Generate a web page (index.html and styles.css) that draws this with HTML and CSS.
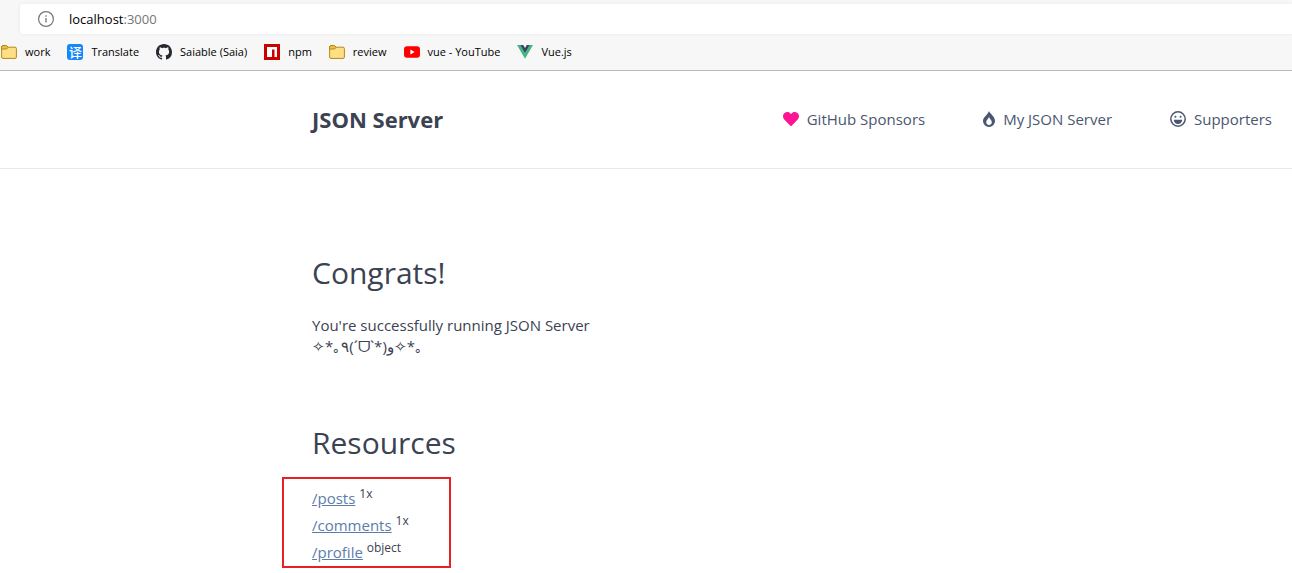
FILE: index.html
```html
<!DOCTYPE html>
<html lang="en">
<head>
<meta charset="utf-8">
<title>JSON Server</title>
<link rel="stylesheet" href="styles.css">
</head>
<body>
<div class="browser">
  <form class="address">
    <svg class="info" viewBox="0 0 16 16" aria-hidden="true"><circle cx="8" cy="8" r="7.4" fill="none" stroke="#767676" stroke-width="1.2"/><path d="M8 7v4.5M8 4.3v1.4" stroke="#767676" stroke-width="1.3"/></svg>
    <button type="button" class="url" aria-label="Edit address">localhost<span class="port">:3000</span></button>
  </form>
  <nav class="bookmarks" aria-label="Bookmarks">
    <a href="#"><svg viewBox="0 0 16 16"><path d="M.6 3.2Q.6 1.6 2 1.6H5.4L7.2 3.2H14Q15.4 3.2 15.4 4.6V13Q15.4 14.4 14 14.4H2Q.6 14.4.6 13Z" fill="#ffdf84" stroke="#b58a14"/><path d="M.6 3.2Q.6 1.6 2 1.6H5.4L7.2 3.2 5.6 5H.6Z" fill="#efc044" stroke="#b58a14"/></svg>work</a>
    <a href="#"><span class="translate">译</span>Translate</a>
    <a href="#"><svg viewBox="0 0 16 16"><path fill="#24292f" d="M8 0C3.58 0 0 3.58 0 8c0 3.54 2.29 6.53 5.47 7.59.4.07.55-.17.55-.38 0-.19-.01-.82-.01-1.49-2.01.37-2.53-.49-2.69-.94-.09-.23-.48-.94-.82-1.13-.28-.15-.68-.52-.01-.53.63-.01 1.08.58 1.23.82.72 1.21 1.87.87 2.33.66.07-.52.28-.87.51-1.07-1.78-.2-3.64-.89-3.64-3.95 0-.87.31-1.59.82-2.15-.08-.2-.36-1.02.08-2.12 0 0 .67-.21 2.2.82.64-.18 1.32-.27 2-.27s1.36.09 2 .27c1.53-1.04 2.2-.82 2.2-.82.44 1.1.16 1.92.08 2.12.51.56.82 1.27.82 2.15 0 3.07-1.87 3.75-3.65 3.95.29.25.54.73.54 1.48 0 1.07-.01 1.93-.01 2.2 0 .21.15.46.55.38A8.01 8.01 0 0 0 16 8c0-4.42-3.58-8-8-8z"/></svg>Saiable (Saia)</a>
    <a href="#"><svg viewBox="0 0 16 16"><path fill="#cb0000" d="M0 0H16V16H0Z"/><path fill="#fff" d="M3 3H13V13H10.5V5.5H8V13H3Z"/></svg>npm</a>
    <a href="#"><svg viewBox="0 0 16 16"><path d="M.6 3.2Q.6 1.6 2 1.6H5.4L7.2 3.2H14Q15.4 3.2 15.4 4.6V13Q15.4 14.4 14 14.4H2Q.6 14.4.6 13Z" fill="#ffdf84" stroke="#b58a14"/><path d="M.6 3.2Q.6 1.6 2 1.6H5.4L7.2 3.2 5.6 5H.6Z" fill="#efc044" stroke="#b58a14"/></svg>review</a>
    <a href="#"><svg viewBox="0 0 16 16"><rect y="2.3" width="16" height="11.4" rx="3" fill="#f00"/><path fill="#fff" d="M6.4 5.6 10.6 8 6.4 10.4Z"/></svg>vue - YouTube</a>
    <a href="#"><svg viewBox="0 0 16 16"><path fill="#41b883" d="M0 1H3.2L8 9.2 12.8 1H16L8 14.8Z"/><path fill="#35495e" d="M3.2 1H6.2L8 4.1 9.8 1H12.8L8 9.3Z"/></svg>Vue.js</a>
  </nav>
</div>
<header class="header">
  <strong class="brand">JSON Server</strong>
  <nav class="links" aria-label="Main">
    <a href="#"><svg class="icon" viewBox="0 0 512 512"><path fill="#ff1493" d="M462.3 62.6C407.5 15.9 326 24.3 275.7 76.2L256 96.5l-19.7-20.3C186.1 24.3 104.5 15.9 49.7 62.6c-62.8 53.6-66.1 149.8-9.9 207.9l193.5 199.8c12.5 12.9 32.8 12.9 45.3 0l193.5-199.8c56.3-58.1 53-154.3-9.8-207.9z"/></svg>GitHub Sponsors</a>
    <a href="#"><svg class="flame" viewBox="0 0 12 16"><path fill="#4a5670" fill-rule="evenodd" d="M6 0C6.7 2.5 12 5.3 12 9.9A6 6 0 0 1 0 9.9C0 6.300 5 3.500 6 0ZM6 5.900C5.400 7.800 3.200 9 3.200 11.100A2.800 2.800 0 0 0 8.800 11.100C8.800 9 6.500 7.900 6 5.900Z"/></svg>My JSON Server</a>
    <a href="#"><svg class="icon" viewBox="0 0 16 16"><circle cx="8" cy="8" r="7.2" fill="none" stroke="#4a5670" stroke-width="1.5"/><circle cx="5.4" cy="5.7" r="1.05" fill="#4a5670"/><circle cx="10.6" cy="5.7" r="1.05" fill="#4a5670"/><path fill="#4a5670" d="M3.7 8.800H12.300Q11.700 13 8 13T3.700 8.800Z"/></svg>Supporters</a>
  </nav>
</header>
<main class="main">
  <h1>Congrats!</h1>
  <p>You're successfully running JSON Server<br><bdo dir="ltr">✧*｡٩(ˊᗜˋ*)و✧*｡</bdo></p>
  <h1 class="second">Resources</h1>
  <ul class="resources">
    <li><a href="#">/posts</a> <sup>1x</sup></li>
    <li><a href="#">/comments</a> <sup>1x</sup></li>
    <li><a href="#">/profile</a> <sup>object</sup></li>
  </ul>
</main>
</body>
</html>
```
FILE: styles.css
```css
* { box-sizing: border-box; }
body { margin: 0; background: #fff; color: #3b4252; font: 15px/22px "Open Sans", "Noto Sans", sans-serif; }
a { color: inherit; text-decoration: none; }
.browser { background: #f7f7f7; border-bottom: 1px solid #bababa; padding-top: 4px; }
.address { display: flex; align-items: center; gap: 15px; height: 30px; margin-left: 20px; padding-left: 18px; background: #fff; border-radius: 3px 0 0 3px; box-shadow: 0 0 3px #e4e4e4; }
.info { width: 16px; height: 16px; }
.url { padding: 0; border: 0; background: none; color: #000; font: 13px/20px "Open Sans", sans-serif; }
.port { color: #767676; }
.bookmarks { display: flex; align-items: center; gap: 17px; height: 36px; padding: 0 1px; color: #000; font-size: 11px; line-height: 16px; }
.bookmarks a { display: flex; align-items: center; gap: 8px; white-space: nowrap; }
.bookmarks svg, .translate { width: 16px; height: 16px; flex: none; }
.translate { border-radius: 3px; background: #1687fa; color: #fff; font: 500 13px/15px "Noto Sans CJK SC", sans-serif; text-align: center; }
.header { display: flex; align-items: center; justify-content: space-between; padding: 34px 20px 35px 312px; border-bottom: 1px solid #eaeaea; }
.brand { font-size: 22px; line-height: 28px; }
.links { display: flex; gap: 58px; color: #4a5670; }
.links a { display: flex; align-items: center; gap: 8px; white-space: nowrap; }
.icon { width: 16px; height: 16px; }
.flame { width: 12px; height: 16px; }
.main { padding: 84px 20px 0 312px; }
h1 { margin: 0 0 22px; font-size: 30px; line-height: 40px; font-weight: 400; }
p { margin: 0; line-height: 21px; }
.second { margin: 66px 0 14px; }
.resources { display: flow-root; width: 169px; margin: 0 0 0 -30px; padding: 6px 0 0 28px; border: 2px solid #ea1f25; list-style: none; }
.resources li { height: 27px; line-height: 27px; }
.resources a { color: #5c7cab; text-decoration: underline; }
sup { font-size: 12px; line-height: 0; }
```
